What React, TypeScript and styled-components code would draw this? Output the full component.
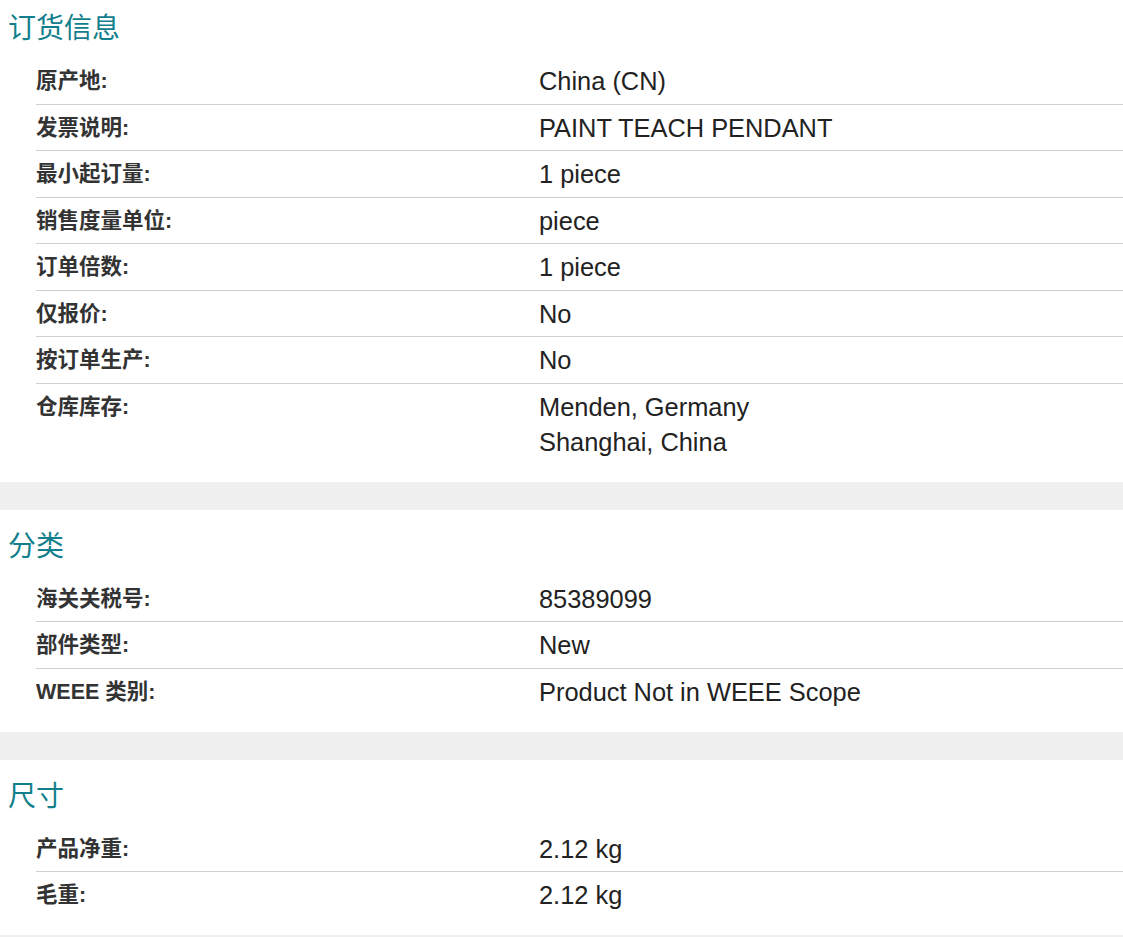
import React from 'react';
import styled, { createGlobalStyle } from 'styled-components';

interface Spec {
	label: string;
	values: string[];
}

interface Group {
	title: string;
	specs: Spec[];
}

const groups: Group[] = [
	{
		title: '订货信息',
		specs: [
			{ label: '原产地:', values: ['China (CN)'] },
			{ label: '发票说明:', values: ['PAINT TEACH PENDANT'] },
			{ label: '最小起订量:', values: ['1 piece'] },
			{ label: '销售度量单位:', values: ['piece'] },
			{ label: '订单倍数:', values: ['1 piece'] },
			{ label: '仅报价:', values: ['No'] },
			{ label: '按订单生产:', values: ['No'] },
			{ label: '仓库库存:', values: ['Menden, Germany', 'Shanghai, China'] },
		],
	},
	{
		title: '分类',
		specs: [
			{ label: '海关关税号:', values: ['85389099'] },
			{ label: '部件类型:', values: ['New'] },
			{ label: 'WEEE 类别:', values: ['Product Not in WEEE Scope'] },
		],
	},
	{
		title: '尺寸',
		specs: [
			{ label: '产品净重:', values: ['2.12 kg'] },
			{ label: '毛重:', values: ['2.12 kg'] },
		],
	},
];

const GlobalStyle = createGlobalStyle`
	body {
		margin: 0;
		background: #fff;
		font-family: "Liberation Sans", "Noto Sans CJK SC", sans-serif;
	}
`;

const Page = styled.div`
	width: 100%;
`;

const Section = styled.section`
	padding: 17px 0 17.5px;

	&:first-child {
		padding-top: 9px;
	}
`;

const SectionTitle = styled.h2`
	margin: 0 0 9px 8px;
	font-family: "Liberation Sans", "Noto Sans CJK SC", sans-serif;
	font-size: 28px;
	font-weight: 400;
	line-height: 40px;
	color: #11808c;
`;

const SpecList = styled.div`
	margin-left: 36px;
`;

const SpecRow = styled.div`
	display: grid;
	grid-template-columns: 503px 1fr;
	padding: 7px 0 5px;
	border-bottom: 1px solid #cfcfcf;

	&:last-child {
		border-bottom: none;
	}
`;

const SpecLabel = styled.div`
	font-size: 21.5px;
	font-weight: 700;
	line-height: 33.5px;
	color: #333;
`;

const ValueList = styled.div`
	display: flex;
	flex-direction: column;
	gap: 1.5px;
`;

const SpecValue = styled.div`
	font-size: 25.4px;
	line-height: 33.5px;
	color: #222;
`;

// 섹션 사이 회색 띠
const Band = styled.div`
	height: 28px;
	background: #f0f0f0;
`;

const App = () => {
	return (
		<>
			<GlobalStyle />
			<Page>
				{groups.map((group) => (
					<React.Fragment key={group.title}>
						<Section>
							<SectionTitle>{group.title}</SectionTitle>
							<SpecList>
								{group.specs.map((spec) => (
									<SpecRow key={spec.label}>
										<SpecLabel>{spec.label}</SpecLabel>
										<ValueList>
											{spec.values.map((v) => (
												<SpecValue key={v}>{v}</SpecValue>
											))}
										</ValueList>
									</SpecRow>
								))}
							</SpecList>
						</Section>
						<Band />
					</React.Fragment>
				))}
			</Page>
		</>
	);
};

export default App;
